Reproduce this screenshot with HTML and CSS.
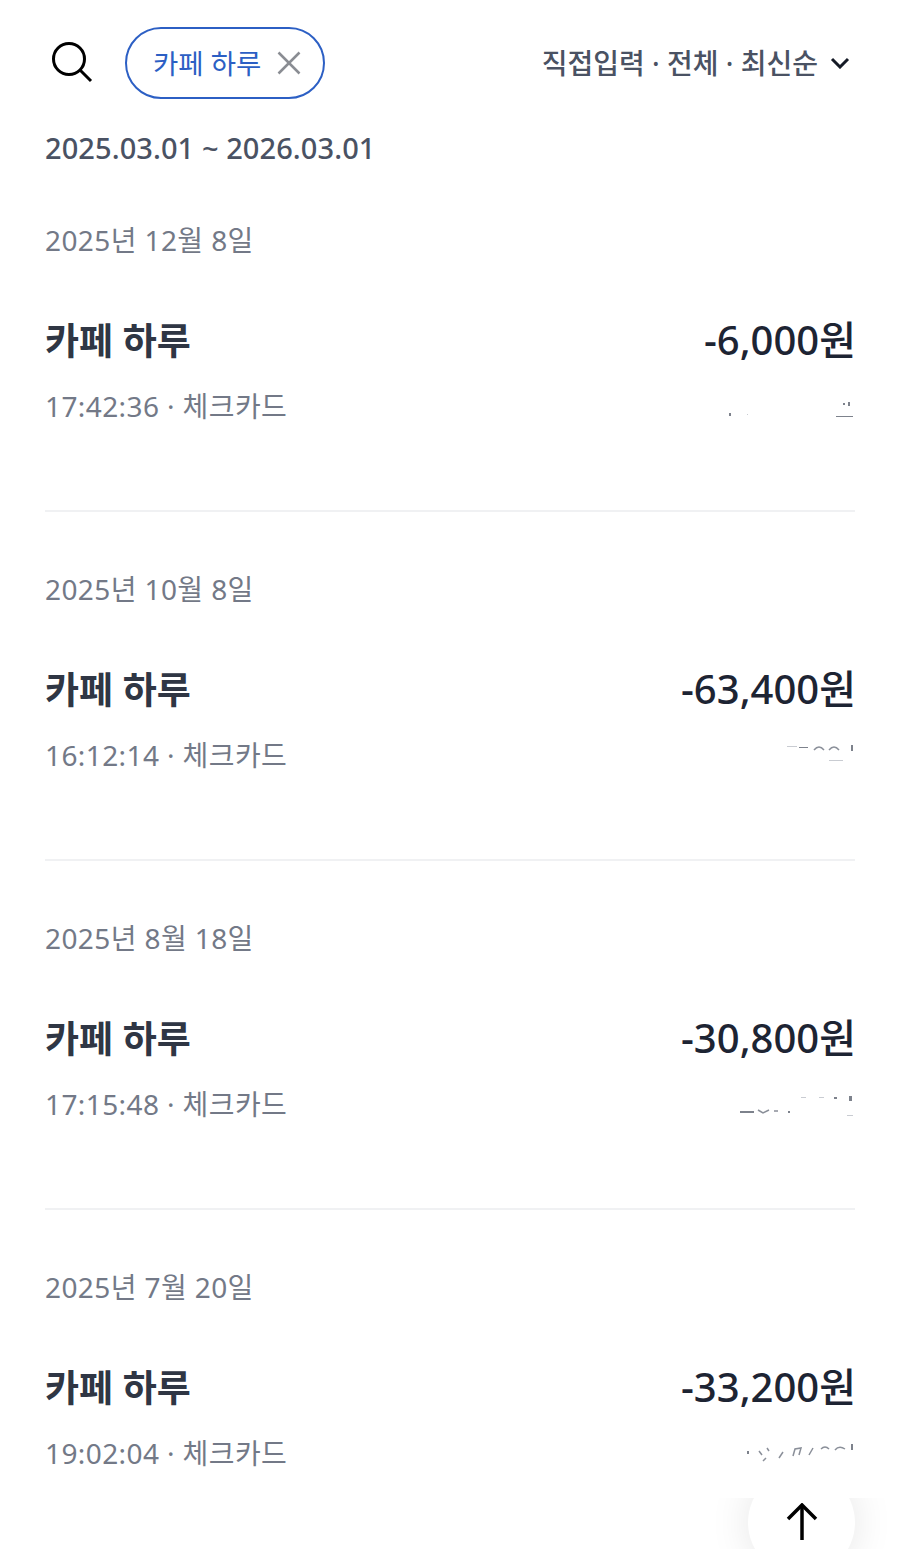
FILE: index.html
```html
<!DOCTYPE html>
<html lang="ko">
<head>
    <meta charset="UTF-8">
    <meta name="viewport" content="width=device-width, initial-scale=1.0">
    <title>거래내역 검색</title>
    <link rel="stylesheet" href="styles.css">
</head>
<body>
    <div class="page">
        <header class="top-bar">
            <svg class="search-icon" viewBox="0 0 42 42" width="42" height="42">
                <circle cx="18" cy="17" r="15.5"></circle>
                <line x1="29" y1="28" x2="40" y2="39"></line>
            </svg>
            <div class="chip">
                <span>카페 하루</span>
                <svg class="chip-close" viewBox="0 0 24 24" width="24" height="24">
                    <line x1="1.5" y1="1.5" x2="22.5" y2="22.5"></line>
                    <line x1="22.5" y1="1.5" x2="1.5" y2="22.5"></line>
                </svg>
            </div>
            <div class="filter">
                <span>직접입력 · 전체 · 최신순</span>
                <svg class="chevron" viewBox="0 0 20 12" width="20" height="12">
                    <polyline points="2,2 10,10 18,2"></polyline>
                </svg>
            </div>
        </header>

        <div class="period">2025.03.01 ~ 2026.03.01</div>

        <section class="entry">
            <div class="entry-date">2025년 12월 8일</div>
            <div class="entry-main">
                <span class="entry-name">카페 하루</span>
                <span class="entry-amount">-6,000원</span>
            </div>
            <div class="entry-sub">
                <span class="entry-meta">17:42:36 · 체크카드</span>
                <svg class="smudge" viewBox="0 0 130 30" width="130" height="30">
                    <rect x="6" y="23" width="2" height="3"></rect>
                    <rect x="24" y="24" width="1" height="1" class="faint"></rect>
                    <rect x="120" y="13" width="2" height="2"></rect>
                    <rect x="125" y="12" width="2" height="4"></rect>
                    <rect x="113" y="26" width="17" height="1"></rect>
                </svg>
            </div>
        </section>

        <section class="entry">
            <div class="entry-date">2025년 10월 8일</div>
            <div class="entry-main">
                <span class="entry-name">카페 하루</span>
                <span class="entry-amount">-63,400원</span>
            </div>
            <div class="entry-sub">
                <span class="entry-meta">16:12:14 · 체크카드</span>
                <svg class="smudge" viewBox="0 0 130 30" width="130" height="30">
                    <rect x="64" y="7" width="10" height="1" class="faint"></rect>
                    <rect x="76" y="8" width="9" height="1"></rect>
                    <path d="M91 11 Q96 5 101 11 M106 11 Q111 5 116 11"></path>
                    <rect x="128" y="6" width="2" height="6"></rect>
                    <rect x="106" y="21" width="14" height="1" class="faint"></rect>
                </svg>
            </div>
        </section>

        <section class="entry">
            <div class="entry-date">2025년 8월 18일</div>
            <div class="entry-main">
                <span class="entry-name">카페 하루</span>
                <span class="entry-amount">-30,800원</span>
            </div>
            <div class="entry-sub">
                <span class="entry-meta">17:15:48 · 체크카드</span>
                <svg class="smudge" viewBox="0 0 130 30" width="130" height="30">
                    <rect x="17" y="23" width="14" height="2"></rect>
                    <path d="M35 22 L40 25 L46 22 M51 23 L55 23"></path>
                    <rect x="65" y="23" width="2" height="2"></rect>
                    <rect x="78" y="9" width="5" height="1" class="faint"></rect>
                    <rect x="96" y="9" width="5" height="1" class="faint"></rect>
                    <rect x="111" y="9" width="3" height="2"></rect>
                    <rect x="126" y="8" width="3" height="5"></rect>
                    <rect x="124" y="27" width="6" height="1" class="faint"></rect>
                </svg>
            </div>
        </section>

        <section class="entry">
            <div class="entry-date">2025년 7월 20일</div>
            <div class="entry-main">
                <span class="entry-name">카페 하루</span>
                <span class="entry-amount">-33,200원</span>
            </div>
            <div class="entry-sub">
                <span class="entry-meta">19:02:04 · 체크카드</span>
                <svg class="smudge" viewBox="0 0 130 30" width="130" height="30">
                    <rect x="24" y="14" width="2" height="3"></rect>
                    <path d="M36 14 L39 18 M44 11 L46 14 M40 24 L43 21"></path>
                    <path d="M56 21 L60 15 M70 19 L72 12 L78 11 L76 18 M86 18 L90 11"></path>
                    <path d="M98 12 Q102 8 106 12 M112 13 Q116 8 122 12"></path>
                    <rect x="128" y="7" width="2" height="6"></rect>
                </svg>
            </div>
        </section>

        <div class="to-top">
            <svg viewBox="0 0 34 38" width="34" height="38">
                <line x1="17" y1="2" x2="17" y2="37"></line>
                <polyline points="3,16 17,2 31,16"></polyline>
            </svg>
        </div>
    </div>
</body>
</html>
```

FILE: styles.css
```css
html, body {
    margin: 0;
    padding: 0;
    background-color: white;
}
.page {
    position: relative;
    width: 900px;
    height: 1549px;
    overflow: hidden;
    padding: 27px 45px 0;
    box-sizing: border-box;
    font-family: "Noto Sans", "Noto Sans CJK KR", sans-serif;
}
.top-bar {
    display: flex;
    align-items: center;
    height: 72px;
}
.search-icon {
    margin: 0 32px 0 6px;
    flex-shrink: 0;
}
.search-icon circle,
.search-icon line {
    fill: none;
    stroke: black;
    stroke-width: 3;
}
.chip {
    display: flex;
    align-items: center;
    gap: 16px;
    height: 72px;
    width: 200px;
    padding-left: 26px;
    box-sizing: border-box;
    border: 2px solid #2c5fc4;
    border-radius: 36px;
    color: #2c5fc4;
    font-size: 27.5px;
}
.chip span {
    padding-bottom: 3px;
}
.chip-close line {
    stroke: #8a8d93;
    stroke-width: 2.5;
}
.filter {
    margin-left: auto;
    margin-right: 5px;
    display: flex;
    align-items: center;
    gap: 12px;
    color: #4a5263;
    font-size: 28px;
    font-weight: 500;
}
.filter span {
    padding-bottom: 3px;
}
.chevron polyline {
    fill: none;
    stroke: #151a26;
    stroke-width: 3;
}
.period {
    margin-top: 27px;
    margin-bottom: 1px;
    color: #4a5263;
    font-size: 29px;
    font-weight: 500;
    letter-spacing: 0.08px;
    line-height: 44px;
}
.entry {
    height: 341px;
    margin-bottom: 8px;
    box-sizing: border-box;
    border-bottom: 2px solid #f0f1f3;
}
.entry:last-of-type {
    border-bottom: none;
}
.entry-date {
    padding-top: 48px;
    color: #737987;
    font-size: 28px;
    letter-spacing: 0.4px;
    line-height: 42px;
}
.entry-main {
    display: flex;
    justify-content: space-between;
    align-items: center;
    margin-top: 53px;
    height: 48px;
    margin-right: -1px;
}
.entry-name {
    padding-top: 2px;
    color: #2f3644;
    font-size: 37px;
    font-weight: 700;
}
.entry-amount {
    color: #1d2433;
    font-size: 40px;
    font-weight: 500;
}
.entry-sub {
    display: flex;
    justify-content: space-between;
    align-items: center;
    margin-top: 23px;
    height: 40px;
    margin-right: 2px;
}
.entry-meta {
    color: #737987;
    font-size: 28px;
    letter-spacing: 0.4px;
}
.smudge {
    fill: #7d828c;
    stroke: none;
}
.smudge path {
    fill: none;
    stroke: #8a8f99;
    stroke-width: 1.5;
}
.smudge .faint {
    fill: #c9ccd2;
}
.to-top {
    position: absolute;
    left: 748px;
    top: 1469px;
    width: 107px;
    height: 107px;
    display: flex;
    align-items: center;
    justify-content: center;
    border-radius: 50%;
    background-color: white;
    box-shadow: 0 0 40px rgba(0, 0, 0, 0.1);
    clip-path: inset(29px -60px -60px -60px);
}
.to-top svg {
    margin-top: -1px;
}
.to-top line,
.to-top polyline {
    fill: none;
    stroke: black;
    stroke-width: 3.5;
}
```
